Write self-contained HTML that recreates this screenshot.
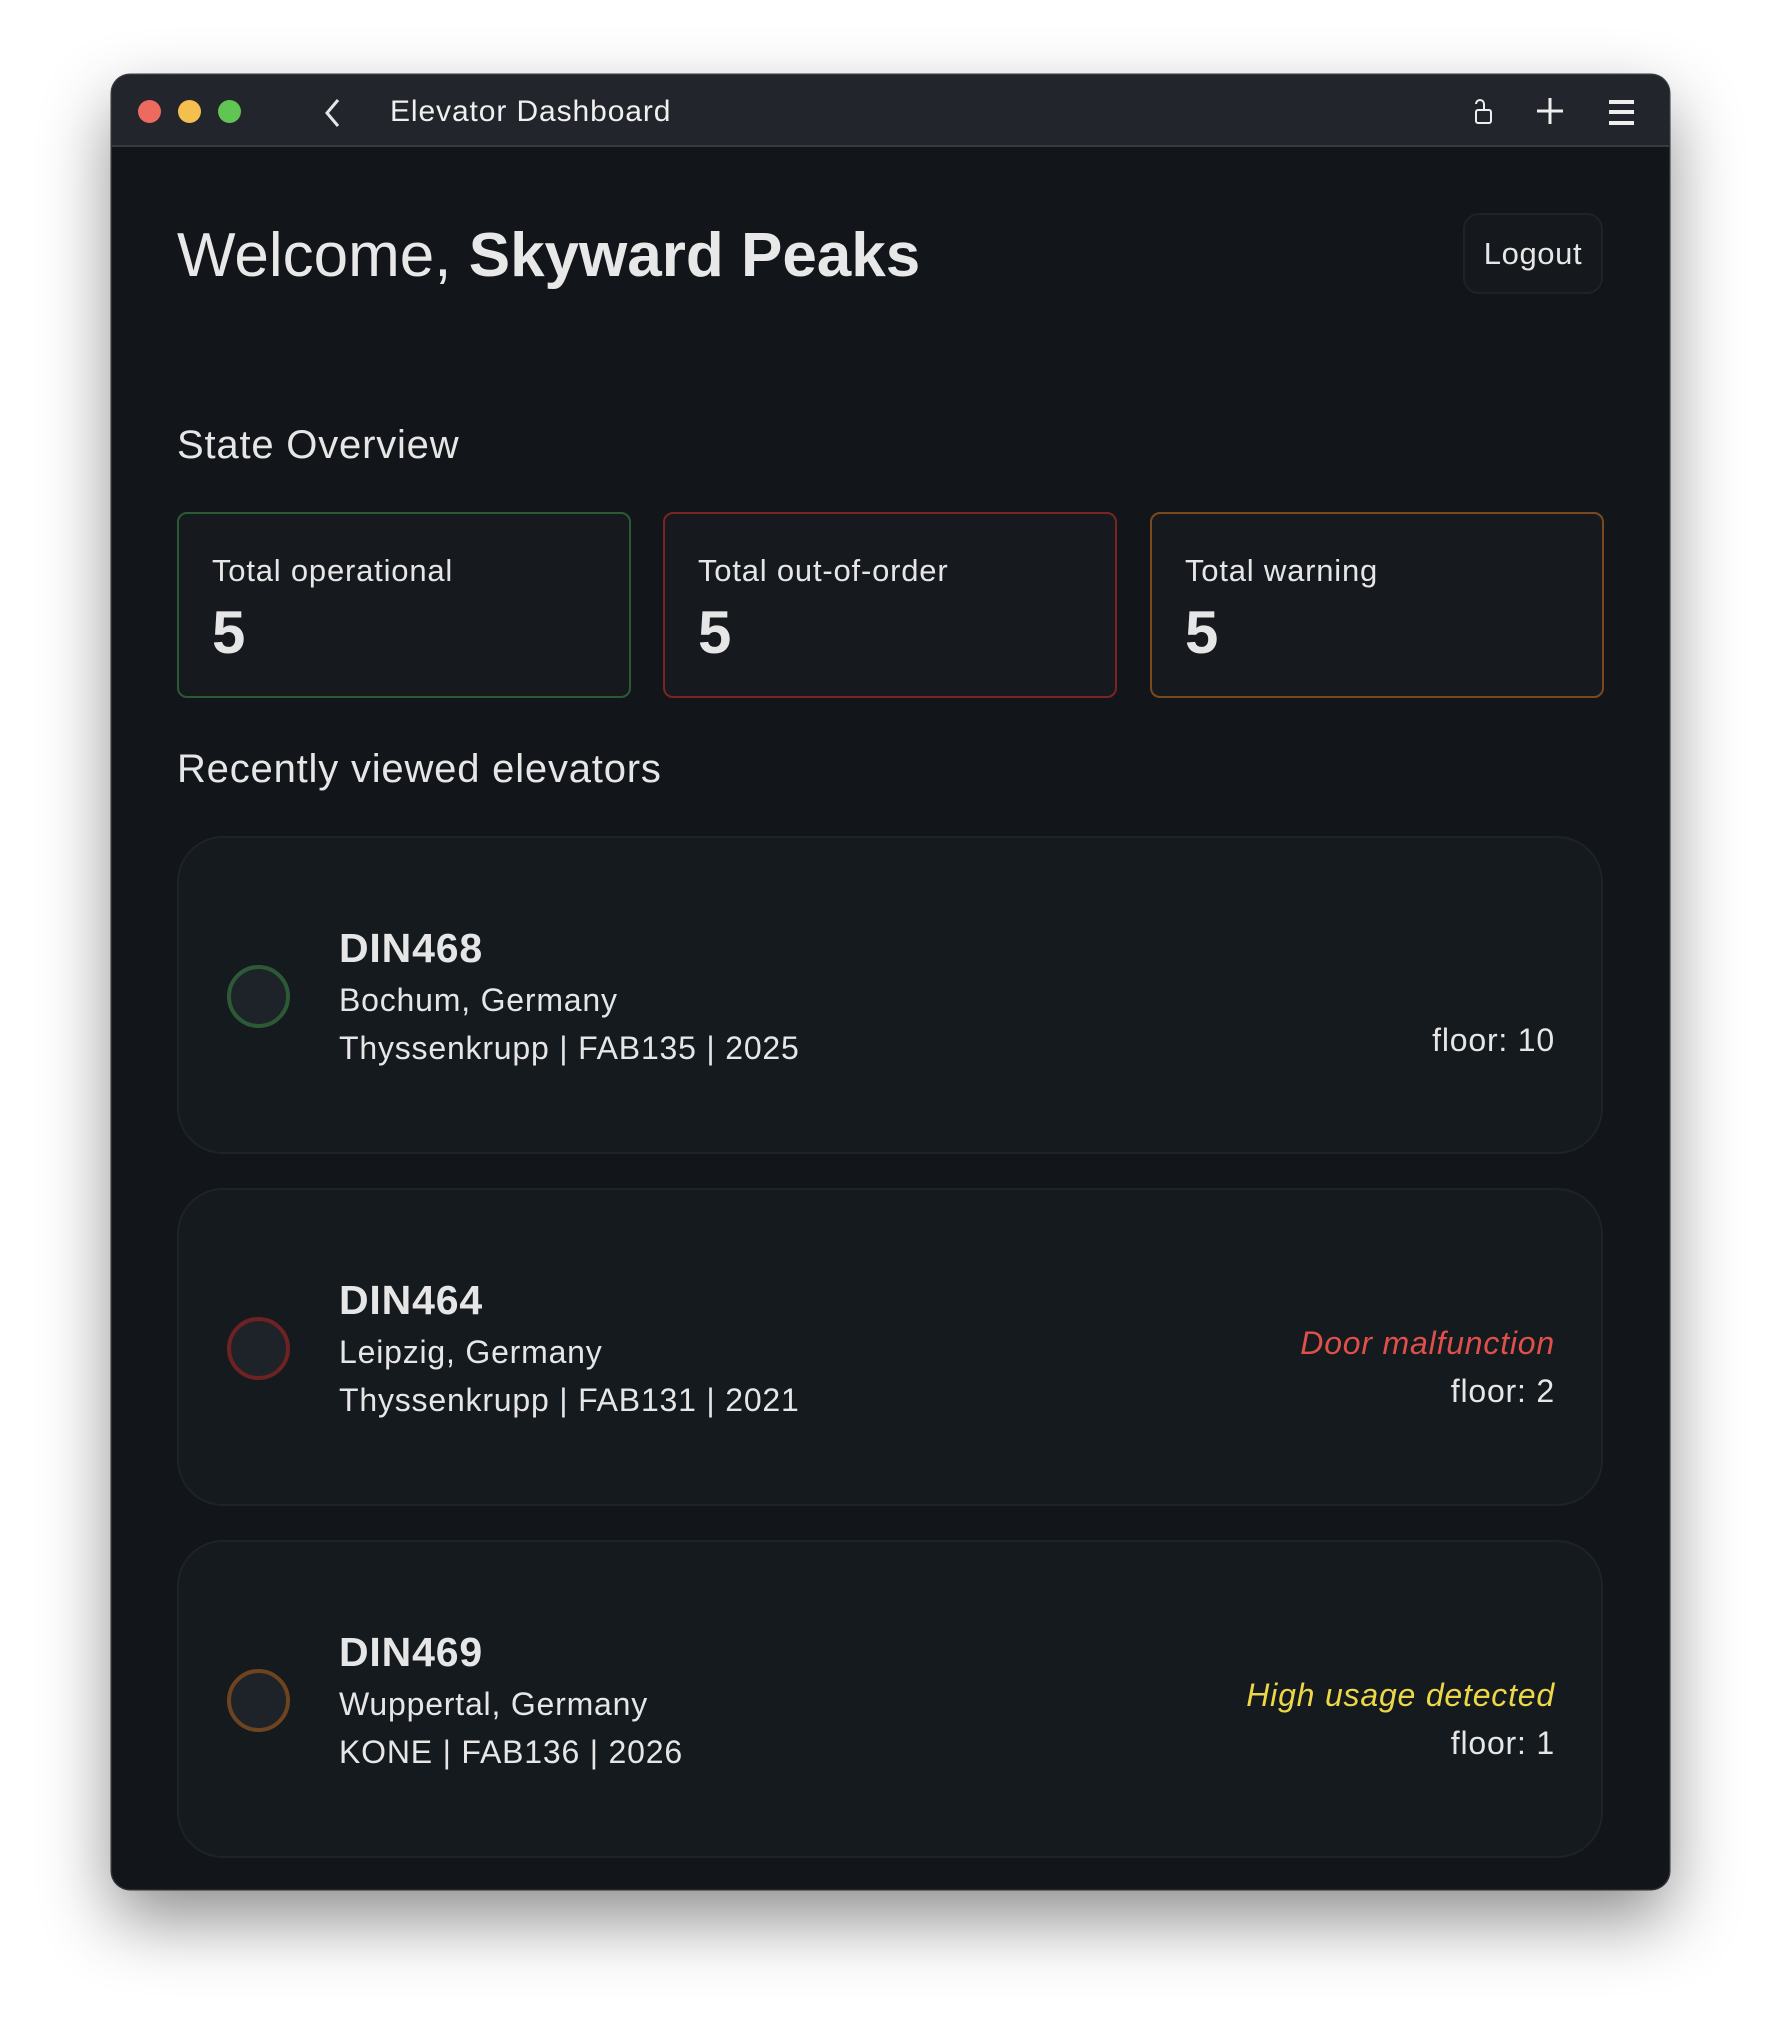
<!DOCTYPE html>
<html><head><meta charset="utf-8"><style>
*{margin:0;padding:0;box-sizing:border-box}
body{width:1782px;height:2040px;background:#fff;font-family:"Liberation Sans",sans-serif;position:relative;overflow:hidden;color:#e6e6e6;letter-spacing:0.05em}
.win{position:absolute;left:112px;top:75px;width:1557px;height:1814px;border-radius:18px;background:#121519;overflow:hidden;box-shadow:0 30px 70px rgba(0,0,0,.45),0 0 0 1.5px #3a3d42}
.tb{position:absolute;left:0;top:0;width:100%;height:72px;background:#22252b;border-bottom:2px solid #383b40}
.dot{position:absolute;top:100px;width:23px;height:23px;border-radius:50%}
.a{position:absolute;white-space:nowrap}
.stat{position:absolute;top:512px;width:454px;height:186px;border-radius:10px;background:#161a1e;border:2px solid}
.stat .l{position:absolute;left:33px;top:39px;font-size:31px}
.stat .n{position:absolute;left:33px;top:84px;font-size:60px;font-weight:bold;letter-spacing:0}
.card{position:absolute;left:177px;width:1426px;height:318px;border-radius:46px;background:#151a1e;border:2px solid #1e2329}
.circ{position:absolute;left:48px;top:127px;width:63px;height:63px;border-radius:50%;border:4px solid;background:#1e2329}
.card .t{position:absolute;left:160px;top:87px;font-size:41px;font-weight:bold;letter-spacing:0.02em}
.card .s{position:absolute;left:160px;top:144px;font-size:32px}
.card .m{position:absolute;left:160px;top:192px;font-size:32px}
.card .r{position:absolute;right:46px;font-size:32px;text-align:right}
</style></head><body>
<div class="win">
 <div class="tb"></div>
</div>
<div class="dot" style="left:138px;background:#ec6a5e"></div>
<div class="dot" style="left:178px;background:#f4bf4f"></div>
<div class="dot" style="left:218px;background:#61c554"></div>
<svg class="a" style="left:322px;top:97px" width="22" height="32"><path d="M16 3 L5 16 L16 29" stroke="#e6e6e6" stroke-width="3" fill="none"/></svg>
<div class="a" style="left:390px;top:95px;font-size:30px;color:#f0f0f0;letter-spacing:0.03em">Elevator Dashboard</div>
<svg class="a" style="left:1472px;top:97px" width="24" height="30"><path d="M12 12 V7 a4 4 0 0 0 -8 0" stroke="#eee" stroke-width="2" fill="none"/><rect x="4" y="13" width="15" height="13" rx="2" stroke="#eee" stroke-width="2" fill="none"/></svg>
<svg class="a" style="left:1535px;top:96px" width="30" height="30"><path d="M15 2V28M2 15H28" stroke="#eee" stroke-width="3"/></svg>
<svg class="a" style="left:1607px;top:98px" width="30" height="30"><path d="M2 4H27M2 14H27M2 25H27" stroke="#eee" stroke-width="4"/></svg>

<div class="a" style="left:177px;top:220px;font-size:62px;color:#e8e8e8;letter-spacing:0">Welcome, <b>Skyward Peaks</b></div>
<div class="a" style="left:1463px;top:213px;width:140px;height:81px;border-radius:16px;border:2px solid #1f2329;background:#15181c;font-size:31px;text-align:center;line-height:77px;letter-spacing:0.02em">Logout</div>

<div class="a" style="left:177px;top:423px;font-size:40px">State Overview</div>
<div class="stat" style="left:177px;border-color:#2b5a34"><div class="l">Total operational</div><div class="n">5</div></div>
<div class="stat" style="left:663px;border-color:#7c2424"><div class="l">Total out-of-order</div><div class="n">5</div></div>
<div class="stat" style="left:1150px;border-color:#7a4a1e"><div class="l">Total warning</div><div class="n">5</div></div>

<div class="a" style="left:177px;top:747px;font-size:40px">Recently viewed elevators</div>

<div class="card" style="top:836px">
 <div class="circ" style="border-color:#2d5a36"></div>
 <div class="t">DIN468</div><div class="s">Bochum, Germany</div><div class="m">Thyssenkrupp | FAB135 | 2025</div>
 <div class="r" style="top:184px">floor: 10</div>
</div>
<div class="card" style="top:1188px">
 <div class="circ" style="border-color:#6e2222"></div>
 <div class="t">DIN464</div><div class="s">Leipzig, Germany</div><div class="m">Thyssenkrupp | FAB131 | 2021</div>
 <div class="r" style="top:135px;color:#e0504a;font-style:italic">Door malfunction</div>
 <div class="r" style="top:183px">floor: 2</div>
</div>
<div class="card" style="top:1540px">
 <div class="circ" style="border-color:#6e4420"></div>
 <div class="t">DIN469</div><div class="s">Wuppertal, Germany</div><div class="m">KONE | FAB136 | 2026</div>
 <div class="r" style="top:135px;color:#ecd746;font-style:italic">High usage detected</div>
 <div class="r" style="top:183px">floor: 1</div>
</div>
</body></html>
